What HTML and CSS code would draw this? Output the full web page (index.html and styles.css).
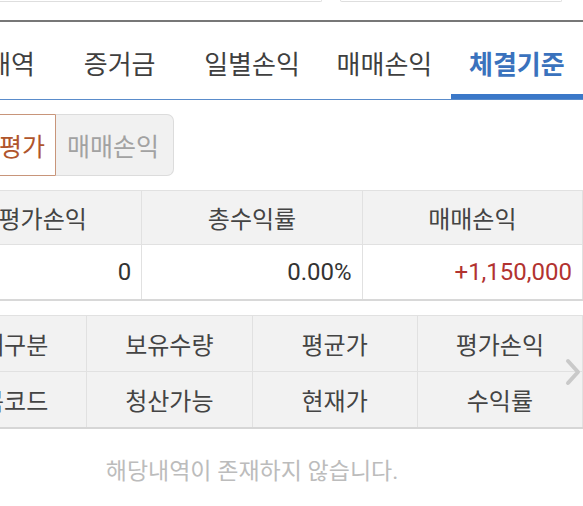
FILE: index.html
```html
<!DOCTYPE html>
<html>
<head>
    <title>체결기준</title>
    <link rel="stylesheet" href="styles.css">
</head>
<body>
    <div class="screen">
        <div class="page">
            <div class="search-row">
                <div class="field field-wide"></div>
                <div class="field field-narrow"></div>
            </div>

            <ul class="tabs">
                <li class="tab">잔고내역</li>
                <li class="tab">증거금</li>
                <li class="tab">일별손익</li>
                <li class="tab">매매손익</li>
                <li class="tab active">체결기준</li>
            </ul>

            <div class="segment">
                <button class="segment-btn on">잔고평가</button>
                <button class="segment-btn">매매손익</button>
            </div>

            <table class="summary">
                <tr>
                    <th>총평가손익</th>
                    <th>총수익률</th>
                    <th>매매손익</th>
                </tr>
                <tr>
                    <td>0</td>
                    <td>0.00%</td>
                    <td class="plus">+1,150,000</td>
                </tr>
            </table>

            <div class="holdings">
                <table class="holdings-head">
                    <tr>
                        <th>매매구분</th>
                        <th>보유수량</th>
                        <th>평균가</th>
                        <th>평가손익</th>
                    </tr>
                    <tr>
                        <th>종목코드</th>
                        <th>청산가능</th>
                        <th>현재가</th>
                        <th>수익률</th>
                    </tr>
                </table>
                <!-- more columns to the right -->
                <svg class="scroll-arrow" width="16" height="28" viewBox="0 0 16 28">
                    <polyline points="3,3 13,14 3,25" fill="none" stroke="#c9c9c9" stroke-width="4" stroke-linecap="round" stroke-linejoin="round"/>
                </svg>
            </div>

            <p class="empty">해당내역이 존재하지 않습니다.</p>
        </div>
    </div>
</body>
</html>
```

FILE: styles.css
```css
body {
    margin: 0;
    background: #fff;
    font-family: Roboto, "Noto Sans CJK KR", sans-serif;
}

.screen {
    width: 583px;
    height: 506px;
    overflow: hidden;
}

.page {
    width: 662px;
    margin-left: -79px;
}

/* bottom edge of the search inputs */
.search-row {
    display: flex;
    gap: 18px;
    padding: 0 21px 18px 0;
}

.field {
    height: 1px;
    border: 1px solid #dedede;
    border-top: none;
    border-radius: 0 0 8px 8px;
}

.field-wide {
    flex: 1;
}

.field-narrow {
    width: 220px;
}

.tabs {
    display: flex;
    margin: 0;
    padding: 0;
    list-style: none;
    border-top: 2px solid #777;
    border-bottom: 1px solid #5a8ccb;
}

.tab {
    flex: 1;
    height: 77px;
    box-sizing: border-box;
    padding-top: 3px;
    display: flex;
    align-items: center;
    justify-content: center;
    font-size: 26px;
    color: #3f3f3f;
}

.tab.active {
    color: #3a72bd;
    font-weight: bold;
    box-shadow: inset 0 -5px 0 #3b78c8;
}

.segment {
    display: flex;
    padding: 14px 0 14px 21px;
}

.segment-btn {
    height: 62px;
    padding: 0 14px 0 11px;
    font-family: Roboto, "Noto Sans CJK KR", sans-serif;
    font-size: 25px;
    background: #f1f1f1;
    color: #a2a2a2;
    border: 1px solid #dcdcdc;
    border-left: none;
    border-radius: 0 7px 7px 0;
}

.segment-btn.on {
    background: #fff;
    color: #b0552c;
    border: 1px solid #c8957a;
    border-radius: 4px 0 0 4px;
    padding: 0 10px;
}

table {
    width: 100%;
    border-collapse: collapse;
    table-layout: fixed;
}

th,
td {
    font-size: 24px;
    font-weight: normal;
    border: 1px solid #e1e1e1;
    padding: 0 10px;
}

.summary {
    border-top: 1px solid #dadada;
    border-bottom: 2px solid #d8d8d8;
}

.summary th {
    height: 53px;
    background: #f2f2f2;
    color: #444;
}

.summary td {
    height: 54px;
    text-align: right;
    color: #333;
}

.summary td.plus {
    color: #b23330;
}

.holdings {
    position: relative;
    margin-top: 14px;
}

.holdings-head {
    border-bottom: 2px solid #d6d6d6;
}

.holdings-head th {
    height: 55px;
    background: #f2f2f2;
    color: #444;
}

.scroll-arrow {
    position: absolute;
    right: 2px;
    top: 43px;
}

.empty {
    margin: 28px 0 0;
    line-height: 30px;
    text-align: center;
    font-size: 23px;
    color: #bcbcbc;
}
```
